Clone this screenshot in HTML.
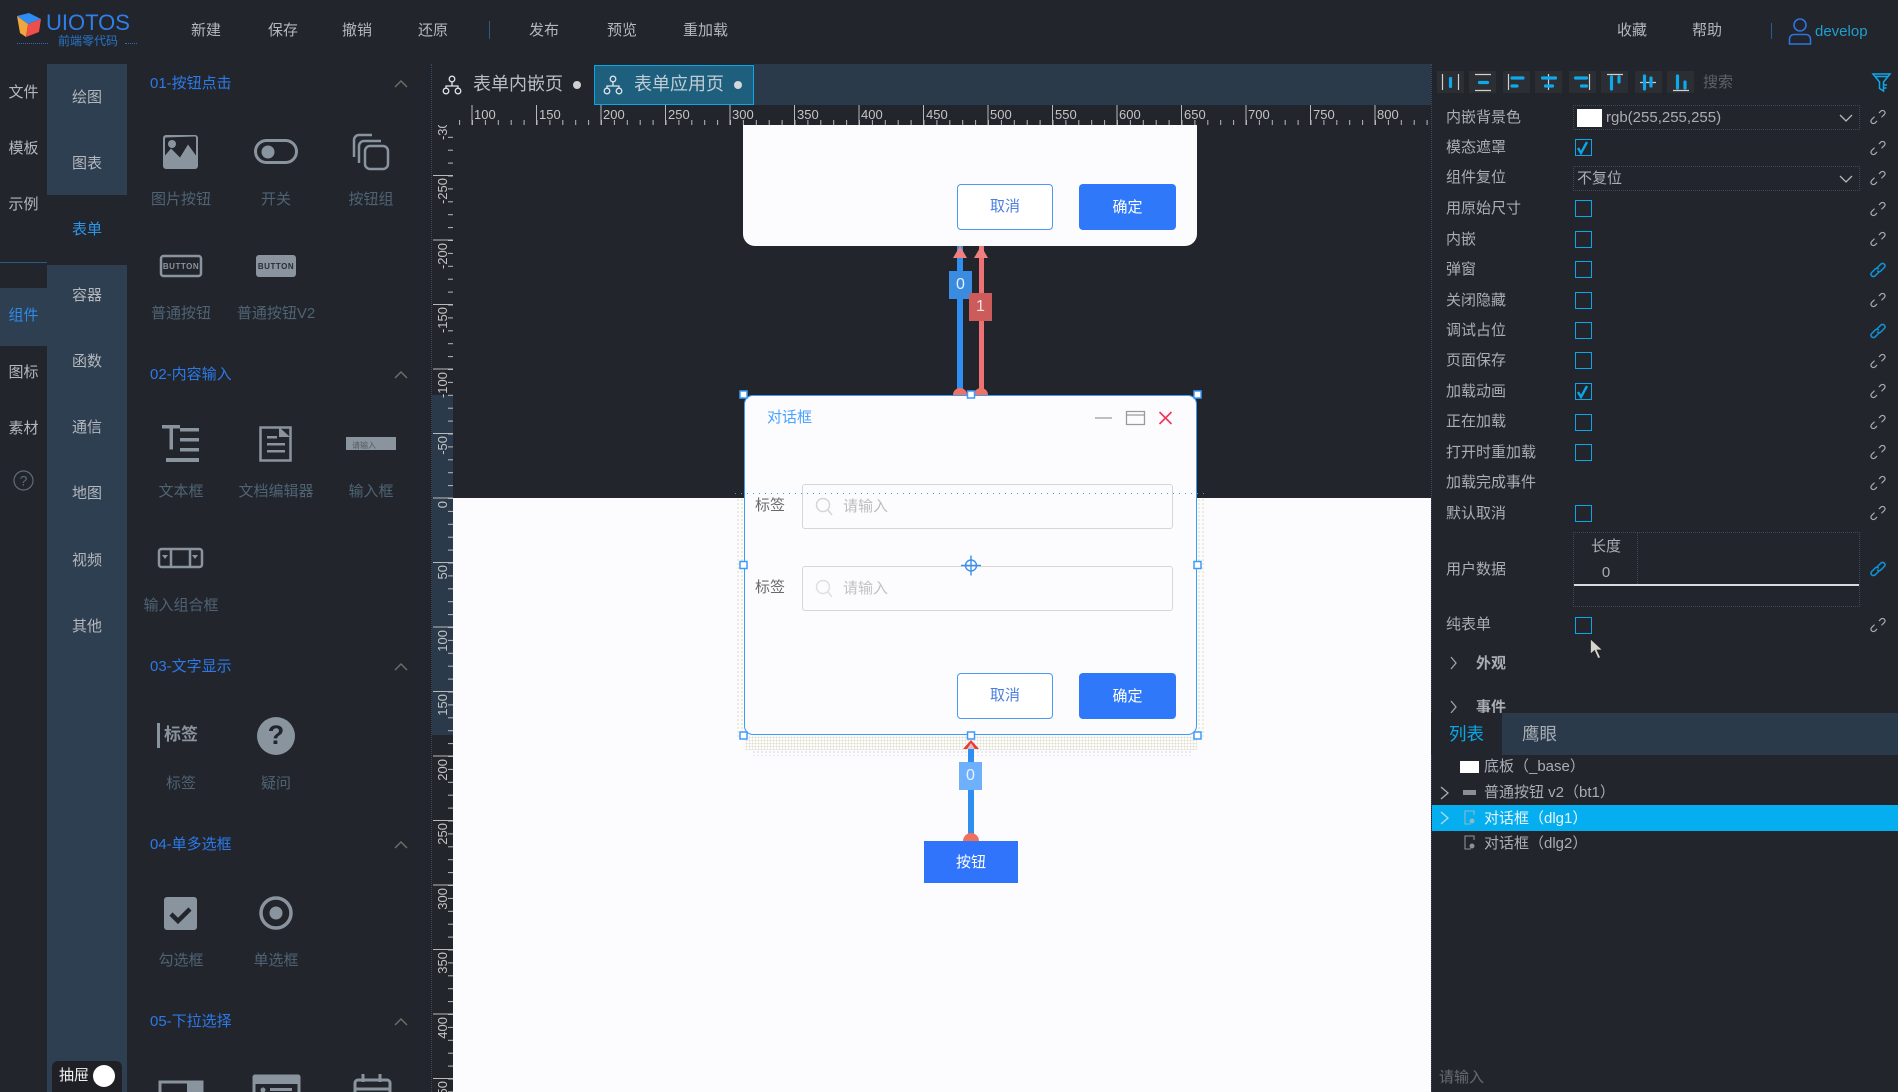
<!DOCTYPE html>
<html lang="zh"><head><meta charset="utf-8"><title>UIOTOS</title>
<style>
*{box-sizing:border-box}
html,body{margin:0;padding:0}
body{width:1898px;height:1092px;position:relative;overflow:hidden;background:#22252b;font-family:"Liberation Sans","Noto Sans CJK SC",sans-serif;font-size:15px;color:#b3b7bd}
.a{position:absolute}
.t{position:absolute;line-height:20px;height:20px;white-space:nowrap;margin-top:1px}
.c{transform:translateX(-50%)}
.m{color:#b4b8be}
.n{color:#b4b8be;text-align:center;width:47px;left:0}
.s{color:#b4b8be;text-align:center;width:80px;left:47px}
.h{color:#2c79e8;left:150px}
.l{color:#4f6375}
.r{left:1446px;color:#a9adb4}
.cb{position:absolute;left:1575px;width:17px;height:17px;border:1.5px solid #0ba6e8}
.tr{left:1484px;color:#a9adb4}
svg{position:absolute;overflow:visible}
</style></head><body>

<!-- backgrounds -->
<div class="a" style="left:47px;top:64px;width:80px;height:131px;background:#2e3f51"></div>
<div class="a" style="left:47px;top:265px;width:80px;height:827px;background:#2e3f51"></div>
<div class="a" style="left:0;top:288px;width:47px;height:58px;background:#2e3f51"></div>
<div class="a" style="left:0;top:262px;width:47px;height:1px;background:#2b5a82"></div>
<div class="a" style="left:754px;top:64px;width:677px;height:41px;background:#2a3a4b"></div>
<div class="a" style="left:594px;top:65px;width:160px;height:40px;background:#1e5f7e;border:1.5px solid #0ba6e8"></div>
<div class="a" style="left:431px;top:64px;width:0;height:1028px;border-left:1px dotted #3a4a5c"></div>
<div class="a" style="left:1431px;top:64px;width:0;height:1028px;border-left:1px dotted #3a4a5c"></div>
<div class="a" style="left:432px;top:395px;width:21px;height:340px;background:#2a3a4b"></div>

<!-- canvas -->
<div class="a" style="left:453px;top:498px;width:978px;height:594px;background:#fcfcff"></div>
<div class="a" style="left:736px;top:498px;width:8px;height:240px;background:radial-gradient(#e8e6cf .8px,transparent .9px) 0 0/4px 4px"></div>
<div class="a" style="left:1197px;top:498px;width:8px;height:240px;background:radial-gradient(#e8e6cf .8px,transparent .9px) 0 0/4px 4px"></div>
<div class="a" style="left:745px;top:736px;width:452px;height:14px;background:radial-gradient(#dfdfc8 .8px,transparent .9px) 0 0/3px 3px"></div>
<div class="a" style="left:752px;top:750px;width:440px;height:6px;background:radial-gradient(#e4e2f0 .8px,transparent .9px) 0 0/4px 4px"></div>

<!-- header -->
<svg style="left:0;top:0" width="60" height="50">
<polygon points="17,16 29,13 41,19 28,24" fill="#2e8cf5"/>
<polygon points="17,16 28,24 26,37 20,33" fill="#f0a63c"/>
<polygon points="28,24 41,19 39,32 26,37" fill="#ee4f4a"/>
</svg>
<div class="t" style="left:46px;top:12px;font-size:22px;color:#2e7fe8;line-height:20px">UIOTOS</div>
<div class="t" style="left:58px;top:30px;font-size:12px;color:#2776c9">前端零代码</div>
<div class="a" style="left:17px;top:43px;width:31px;border-top:1px dotted #2d6fb8"></div>
<div class="a" style="left:125px;top:43px;width:12px;border-top:1px dotted #2d6fb8"></div>
<div class="t m" style="left:191px;top:20px">新建</div>
<div class="t m" style="left:268px;top:20px">保存</div>
<div class="t m" style="left:342px;top:20px">撤销</div>
<div class="t m" style="left:418px;top:20px">还原</div>
<div class="a" style="left:489px;top:21px;width:1px;height:18px;background:#2c5a8c"></div>
<div class="t m" style="left:529px;top:20px">发布</div>
<div class="t m" style="left:607px;top:20px">预览</div>
<div class="t m" style="left:683px;top:20px">重加载</div>
<div class="t m" style="left:1617px;top:20px">收藏</div>
<div class="t m" style="left:1692px;top:20px">帮助</div>
<div class="a" style="left:1771px;top:23px;width:1px;height:16px;background:#2c5a8c"></div>
<svg style="left:1788px;top:18px" width="24" height="27" fill="none" stroke="#2e74e0" stroke-width="1.6"><circle cx="12" cy="7" r="6"/><path d="M1.5 26V21a4.5 4.5 0 0 1 4.5-4.5h12a4.5 4.5 0 0 1 4.5 4.5v5z"/></svg>
<div class="t" style="left:1815px;top:21px;color:#1f9fd0">develop</div>

<!-- col 1 -->
<div class="t n" style="top:82px">文件</div>
<div class="t n" style="top:138px">模板</div>
<div class="t n" style="top:194px">示例</div>
<div class="t n" style="top:305px;color:#2f8ae8">组件</div>
<div class="t n" style="top:362px">图标</div>
<div class="t n" style="top:418px">素材</div>
<svg style="left:13px;top:470px" width="22" height="22"><circle cx="10.5" cy="10.5" r="9.5" fill="none" stroke="#5f6c78" stroke-width="1.2"/><text x="10.5" y="15.5" font-size="14" text-anchor="middle" fill="#5f6c78" font-family="Liberation Sans">?</text></svg>

<!-- col 2 -->
<div class="t s" style="top:87px">绘图</div>
<div class="t s" style="top:153px">图表</div>
<div class="t s" style="top:219px;color:#2b95ea">表单</div>
<div class="t s" style="top:285px">容器</div>
<div class="t s" style="top:351px">函数</div>
<div class="t s" style="top:417px">通信</div>
<div class="t s" style="top:483px">地图</div>
<div class="t s" style="top:550px">视频</div>
<div class="t s" style="top:616px">其他</div>

<!-- panel headings -->
<div class="t h" style="top:73px">01-按钮点击</div>
<div class="t h" style="top:364px">02-内容输入</div>
<div class="t h" style="top:656px">03-文字显示</div>
<div class="t h" style="top:834px">04-单多选框</div>
<div class="t h" style="top:1011px">05-下拉选择</div>
<svg style="left:0;top:0" width="1" height="1" fill="none" stroke="#6d7268" stroke-width="1.4">
<path d="M395 87l6-6 6 6M395 378l6-6 6 6M395 670l6-6 6 6M395 848l6-6 6 6M395 1025l6-6 6 6"/>
</svg>

<!-- gallery icons -->
<svg style="left:0;top:0" width="1" height="1">
<g fill="#8a949e">
<path fill-rule="evenodd" d="M166 135h29a3 3 0 0 1 3 3v28a3 3 0 0 1-3 3h-29a3 3 0 0 1-3-3v-28a3 3 0 0 1 3-3zm0 2.500a1 1 0 0 0-1 1v17l6-7 9 9 8-13 8 11v-18a1 1 0 0 0-1-1z"/>
<circle cx="172" cy="144" r="4"/>
</g>
<rect x="255.500" y="140.500" width="41" height="22" rx="11" fill="none" stroke="#8a949e" stroke-width="3"/>
<circle cx="268" cy="152" r="6.500" fill="#8a949e"/>
<g fill="none" stroke="#8a949e" stroke-width="2.500">
<rect x="365" y="146" width="23" height="23" rx="5"/>
<path d="M359 163v-17a5 5 0 0 1 5-5h17"/>
<path d="M354 157v-17a5 5 0 0 1 5-5h13"/>
<rect x="161" y="256" width="40" height="20" rx="2.500"/>
<rect x="260.500" y="427.500" width="30" height="33"/>
<rect x="159" y="549" width="43" height="18" rx="2.500"/>
<path d="M171 549v18M190 549v18"/>
</g>
<rect x="256" y="255" width="40" height="22" rx="3" fill="#8a949e"/>
<text x="181" y="269" font-size="8" font-weight="bold" text-anchor="middle" fill="#8a949e" font-family="Liberation Sans" letter-spacing=".5">BUTTON</text>
<text x="276" y="269" font-size="8" font-weight="bold" text-anchor="middle" fill="#2a2d33" font-family="Liberation Sans" letter-spacing=".5">BUTTON</text>
<g fill="#8a949e">
<path d="M162 425h18v3.500h-7v21h-3.500v-21h-7.500z"/>
<rect x="180" y="428" width="19" height="3.500"/><rect x="180" y="438" width="19" height="3.500"/><rect x="180" y="448" width="19" height="3.500"/>
<rect x="166" y="458" width="33" height="4"/>
<path d="M279 427l11 10h-11z"/>
<rect x="267" y="436" width="10" height="2.500"/><rect x="267" y="443" width="18" height="2.500"/><rect x="267" y="450" width="18" height="2.500"/>
<rect x="346" y="437" width="50" height="13"/>
<path d="M162 555h6l-3 4zM192 555h6l-3 4z"/>
<rect x="157" y="723" width="3" height="25"/>
<circle cx="276" cy="736" r="19"/>
<rect x="164" y="897" width="33" height="33" rx="3"/>
<circle cx="276" cy="913" r="6.500"/>
</g>
<text x="352" y="448" font-size="8" fill="#555b60" font-family="Liberation Sans,Noto Sans CJK SC">请输入</text>
<text x="181" y="740" font-size="17" font-weight="bold" text-anchor="middle" fill="#8a949e" font-family="Liberation Sans,Noto Sans CJK SC">标签</text>
<text x="276" y="744" font-size="27" font-weight="bold" text-anchor="middle" fill="#22252b" font-family="Liberation Sans">?</text>
<path d="M171 914l7 7 12-12" fill="none" stroke="#22252b" stroke-width="4.500"/>
<circle cx="276" cy="913" r="15" fill="none" stroke="#8a949e" stroke-width="3.500"/>
<g fill="none" stroke="#8a949e" stroke-width="3">
<path d="M160 1094v-12h42v12"/>
<path d="M254 1094v-17a1 1 0 0 1 1-1h43a1 1 0 0 1 1 1v17"/>
<path d="M355 1094v-11a3 3 0 0 1 3-3h29a3 3 0 0 1 3 3v11M354 1089h36M363 1074v8M380 1074v8"/>
</g>
<rect x="187" y="1081" width="15" height="12" fill="#8a949e"/>
<rect x="254" y="1076" width="45" height="8" fill="#8a949e"/>
<circle cx="263" cy="1090" r="2.500" fill="#8a949e"/>
<rect x="270" y="1088" width="22" height="3" fill="#8a949e"/>
</svg>

<div class="t l c" style="left:181px;top:189px">图片按钮</div>
<div class="t l c" style="left:276px;top:189px">开关</div>
<div class="t l c" style="left:371px;top:189px">按钮组</div>
<div class="t l c" style="left:181px;top:303px">普通按钮</div>
<div class="t l c" style="left:276px;top:303px">普通按钮V2</div>
<div class="t l c" style="left:181px;top:481px">文本框</div>
<div class="t l c" style="left:276px;top:481px">文档编辑器</div>
<div class="t l c" style="left:371px;top:481px">输入框</div>
<div class="t l c" style="left:181px;top:595px">输入组合框</div>
<div class="t l c" style="left:181px;top:773px">标签</div>
<div class="t l c" style="left:276px;top:773px">疑问</div>
<div class="t l c" style="left:181px;top:950px">勾选框</div>
<div class="t l c" style="left:276px;top:950px">单选框</div>

<!-- drawer toggle -->
<div class="a" style="left:52px;top:1061px;width:70px;height:31px;border-radius:6px 6px 0 0;background:#1e2025"></div>
<div class="t" style="left:59px;top:1065px;color:#f0f0f0">抽屉</div>
<div class="a" style="left:93px;top:1065px;width:22px;height:22px;border-radius:50%;background:#fff"></div>

<!-- tabs -->
<svg style="left:0;top:0" width="1" height="1" fill="none" stroke="#dfe3e6" stroke-width="1.300">
<g><circle cx="452" cy="79" r="2.800"/><circle cx="446" cy="91" r="2.800"/><circle cx="458" cy="91" r="2.800"/><path d="M452 82v4M446 88v-2h12v2"/></g>
<g transform="translate(161,0)"><circle cx="452" cy="79" r="2.800"/><circle cx="446" cy="91" r="2.800"/><circle cx="458" cy="91" r="2.800"/><path d="M452 82v4M446 88v-2h12v2"/></g>
</svg>
<div class="t" style="left:473px;top:73px;font-size:18px;color:#b9bdc3">表单内嵌页</div>
<div class="a" style="left:573px;top:81px;width:8px;height:8px;border-radius:50%;background:#cfcfcf"></div>
<div class="t" style="left:634px;top:73px;font-size:18px;color:#c0ccd4">表单应用页</div>
<div class="a" style="left:734px;top:81px;width:8px;height:8px;border-radius:50%;background:#d4d8da"></div>

<!-- rulers -->
<svg style="left:0;top:0" width="1898" height="1092">
<defs>
<pattern id="hp" patternUnits="userSpaceOnUse" width="12.900" height="5" x="472" y="120"><rect width="1" height="5" fill="#b9b9b9"/></pattern>
<pattern id="vp" patternUnits="userSpaceOnUse" width="5" height="12.900" x="448" y="498"><rect width="5" height="1" fill="#b9b9b9"/></pattern>
<clipPath id="hc"><rect x="453" y="105" width="978" height="20"/></clipPath>
<clipPath id="vc"><rect x="432" y="125" width="21" height="967"/></clipPath>
</defs>
<rect x="453" y="120" width="978" height="5" fill="url(#hp)"/>
<rect x="448" y="125" width="5" height="967" fill="url(#vp)"/>
<path d="M472 105v20M536.500 105v20M601 105v20M665.500 105v20M730 105v20M794.500 105v20M859 105v20M923.500 105v20M988 105v20M1052.500 105v20M1117 105v20M1181.500 105v20M1246 105v20M1310.500 105v20M1375 105v20" stroke="#b9b9b9" stroke-width="1" fill="none"/>
<path d="M433 175.500h20M433 240h20M433 304.500h20M433 369h20M433 433.500h20M433 498h20M433 562.500h20M433 627h20M433 691.500h20M433 756h20M433 820.500h20M433 885h20M433 949.500h20M433 1014h20M433 1078.500h20" stroke="#b9b9b9" stroke-width="1" fill="none"/>
<g font-size="13" fill="#c4c4c4" font-family="Liberation Sans" clip-path="url(#hc)">
<text x="474" y="119">100</text><text x="539" y="119">150</text><text x="603" y="119">200</text><text x="668" y="119">250</text><text x="732" y="119">300</text><text x="797" y="119">350</text><text x="861" y="119">400</text><text x="926" y="119">450</text><text x="990" y="119">500</text><text x="1055" y="119">550</text><text x="1119" y="119">600</text><text x="1184" y="119">650</text><text x="1248" y="119">700</text><text x="1313" y="119">750</text><text x="1377" y="119">800</text>
</g>
<g font-size="13" fill="#c4c4c4" font-family="Liberation Sans" text-anchor="end" clip-path="url(#vc)">
<text transform="translate(447,114) rotate(-90)">-300</text>
<text transform="translate(447,178) rotate(-90)">-250</text>
<text transform="translate(447,243) rotate(-90)">-200</text>
<text transform="translate(447,307) rotate(-90)">-150</text>
<text transform="translate(447,372) rotate(-90)">-100</text>
<text transform="translate(447,436) rotate(-90)">-50</text>
<text transform="translate(447,501) rotate(-90)">0</text>
<text transform="translate(447,565) rotate(-90)">50</text>
<text transform="translate(447,630) rotate(-90)">100</text>
<text transform="translate(447,694) rotate(-90)">150</text>
<text transform="translate(447,759) rotate(-90)">200</text>
<text transform="translate(447,823) rotate(-90)">250</text>
<text transform="translate(447,888) rotate(-90)">300</text>
<text transform="translate(447,952) rotate(-90)">350</text>
<text transform="translate(447,1017) rotate(-90)">400</text>
<text transform="translate(447,1081) rotate(-90)">450</text>
</g>
</svg>

<!-- top dialog -->
<div class="a" style="left:743px;top:125px;width:454px;height:121px;background:#fcfcff;border-radius:0 0 12px 12px"></div>
<div class="a" style="left:957px;top:184px;width:96px;height:46px;border:1.5px solid #4b97f5;border-radius:4px;background:#fff;color:#4b7fe0;text-align:center;line-height:44px">取消</div>
<div class="a" style="left:1079px;top:184px;width:97px;height:46px;background:#2f78fa;border-radius:4px;color:#fff;text-align:center;line-height:47px">确定</div>

<!-- connectors top -->
<div class="a" style="left:957px;top:246px;width:6px;height:150px;background:#2e8ff0"></div>
<div class="a" style="left:979px;top:246px;width:5px;height:150px;background:#ee7272"></div>
<svg style="left:0;top:0" width="1" height="1">
<polygon points="960,246 953,258 967,258" fill="#f08080"/>
<polygon points="981,246 974,258 988,258" fill="#f08080"/>
<path d="M953 395a7 7 0 0 1 14 0zM974 395a7 7 0 0 1 14 0z" fill="#ee7266"/>
</svg>
<div class="a" style="left:949px;top:271px;width:23px;height:28px;background:#3a8ce0;color:#e8f0fa;text-align:center;line-height:27px;font-size:16px">0</div>
<div class="a" style="left:969px;top:293px;width:23px;height:28px;background:#cc5b5b;color:#f5e3e3;text-align:center;line-height:27px;font-size:16px">1</div>

<!-- selected dialog -->
<div class="a" style="left:744px;top:395px;width:453px;height:340px;background:#fcfcff;border:1.5px solid #3d9bf8;border-radius:9px"></div>
<div class="t" style="left:767px;top:407px;color:#4ba3ff">对话框</div>
<svg style="left:0;top:0" width="1" height="1" fill="none">
<path d="M1095 418h17" stroke="#9a9a9a" stroke-width="1.200"/>
<path d="M1126.500 411.500h18v13h-18zM1126.500 415h18" stroke="#9a9a9a" stroke-width="1.300"/>
<path d="M1159.500 412l12 12M1171.500 412l-12 12" stroke="#f5335a" stroke-width="1.600"/>
<circle cx="823" cy="505" r="6.500" stroke="#d5d5d5" stroke-width="1.500"/><path d="M828 510l4 5" stroke="#d5d5d5" stroke-width="1.500"/>
<circle cx="823" cy="587" r="6.500" stroke="#dfdfdf" stroke-width="1.500"/><path d="M828 592l4 5" stroke="#dfdfdf" stroke-width="1.500"/>
</svg>
<div class="t" style="left:755px;top:495px;color:#6a6a6a">标签</div>
<div class="t" style="left:755px;top:577px;color:#6a6a6a">标签</div>
<div class="a" style="left:802px;top:484px;width:371px;height:45px;border:1px solid #d6d6d2;border-radius:3px"></div>
<div class="a" style="left:802px;top:566px;width:371px;height:45px;border:1px solid #d6d6d2;border-radius:3px"></div>
<div class="t" style="left:843px;top:496px;color:#bdbdbd">请输入</div>
<div class="t" style="left:843px;top:578px;color:#c2c2c2">请输入</div>
<div class="a" style="left:957px;top:673px;width:96px;height:46px;border:1.5px solid #4b97f5;border-radius:4px;background:#fff;color:#4b7fe0;text-align:center;line-height:44px">取消</div>
<div class="a" style="left:1079px;top:673px;width:97px;height:46px;background:#2f78fa;border-radius:4px;color:#fff;text-align:center;line-height:47px">确定</div>
<div class="a" style="left:735px;top:493px;width:472px;height:1px;background:repeating-linear-gradient(90deg,#3d9bf8 0 1px,transparent 1px 6px)"></div>

<!-- crosshair -->
<svg style="left:0;top:0" width="1" height="1" fill="none" stroke="#3d8ff0" stroke-width="1.400">
<circle cx="971" cy="565.500" r="5.500"/><path d="M961 565.500h20M971 555.500v20"/>
</svg>

<!-- handles -->
<svg style="left:0;top:0" width="1" height="1" fill="#fff" stroke="#3d9bf8" stroke-width="1.500">
<rect x="740" y="391" width="7" height="7"/><rect x="967.500" y="391" width="7" height="7"/><rect x="1194" y="391" width="7" height="7"/>
<rect x="740" y="561.500" width="7" height="7"/><rect x="1194" y="561.500" width="7" height="7"/>
<rect x="740" y="732" width="7" height="7"/><rect x="967.500" y="732" width="7" height="7"/><rect x="1194" y="732" width="7" height="7"/>
</svg>

<!-- bottom connector -->
<div class="a" style="left:968px;top:748px;width:6px;height:88px;background:#2e8ff0"></div>
<svg style="left:0;top:0" width="1" height="1">
<polygon points="971,740 963,749 979,749" fill="#f03535"/>
<polygon points="971,743 967,749 975,749" fill="#d8c0c0"/>
<path d="M963 841a8 8 0 0 1 16 0z" fill="#f0705e"/>
</svg>
<div class="a" style="left:959px;top:762px;width:23px;height:28px;background:#6eb0fc;color:#e8f2ff;text-align:center;line-height:27px;font-size:16px">0</div>
<div class="a" style="left:924px;top:841px;width:94px;height:42px;background:#2f74fa;color:#fff;text-align:center;line-height:43px;font-size:15px">按钮</div>

<!-- right panel toolbar -->
<svg style="left:0;top:0" width="1" height="1">
<g fill="#2b2e33"><rect x="1437" y="71" width="27" height="22"/><rect x="1469" y="71" width="27" height="22"/><rect x="1503" y="71" width="27" height="22"/><rect x="1535" y="71" width="27" height="22"/><rect x="1569" y="71" width="27" height="22"/><rect x="1601" y="71" width="27" height="22"/><rect x="1635" y="71" width="27" height="22"/><rect x="1667" y="71" width="27" height="22"/></g>
<g stroke="#d0d0d0" stroke-width="1.200" fill="none">
<path d="M1442.500 74v16M1458.500 74v16M1475 74.500h16M1475 90.500h16M1508.500 74v16M1548.500 74v16M1589.500 74v16M1607 74.500h16M1640 82.500h16M1673 90.500h16"/>
</g>
<g stroke="#0fa8ea" stroke-width="3.200" stroke-linecap="round" fill="none">
<path d="M1450.500 78.500v8M1479.500 82.500h8M1512 78h11M1512 86h5M1542.500 78h13M1545.500 86h7M1575.500 78h11M1581.500 86h5M1611.500 77v12M1619 77v5M1644.500 76v13M1651 78v8M1677.500 76v12M1685 82v6"/>
</g>
<path d="M1873 74h17l-6.500 8v9l-4-2.500v-6.500zM1875.500 76.500h12M1884 85h3M1884 88h2.500" fill="none" stroke="#0fa8ea" stroke-width="1.500"/>
</svg>
<div class="t" style="left:1703px;top:72px;color:#5f6266">搜索</div>

<!-- property rows -->
<div class="t r" style="top:107px">内嵌背景色</div>
<div class="t r" style="top:137px">模态遮罩</div>
<div class="t r" style="top:167px">组件复位</div>
<div class="t r" style="top:198px">用原始尺寸</div>
<div class="t r" style="top:229px">内嵌</div>
<div class="t r" style="top:259px">弹窗</div>
<div class="t r" style="top:290px">关闭隐藏</div>
<div class="t r" style="top:320px">调试占位</div>
<div class="t r" style="top:350px">页面保存</div>
<div class="t r" style="top:381px">加载动画</div>
<div class="t r" style="top:411px">正在加载</div>
<div class="t r" style="top:442px">打开时重加载</div>
<div class="t r" style="top:472px">加载完成事件</div>
<div class="t r" style="top:503px">默认取消</div>
<div class="t r" style="top:559px">用户数据</div>
<div class="t r" style="top:614px">纯表单</div>
<div class="t" style="left:1476px;top:653px;font-weight:bold;color:#a9adb4">外观</div>
<div class="t" style="left:1476px;top:697px;font-weight:bold;color:#a9adb4">事件</div>

<div class="a" style="left:1573px;top:105px;width:287px;height:25px;border:1px dotted #3b4a58"></div>
<div class="a" style="left:1577px;top:109px;width:25px;height:18px;background:#fff"></div>
<div class="t" style="left:1606px;top:107px;color:#a9adb4">rgb(255,255,255)</div>
<div class="a" style="left:1573px;top:166px;width:287px;height:25px;border:1px dotted #3b4a58"></div>
<div class="t" style="left:1577px;top:168px;color:#a9adb4">不复位</div>

<div class="cb" style="top:139px"></div>
<div class="cb" style="top:200px"></div>
<div class="cb" style="top:231px"></div>
<div class="cb" style="top:261px"></div>
<div class="cb" style="top:292px"></div>
<div class="cb" style="top:322px"></div>
<div class="cb" style="top:352px"></div>
<div class="cb" style="top:383px"></div>
<div class="cb" style="top:414px"></div>
<div class="cb" style="top:444px"></div>
<div class="cb" style="top:505px"></div>
<div class="cb" style="top:617px"></div>

<svg style="left:0;top:0" width="1" height="1" fill="none">
<defs>
<g id="lk" stroke-width="1.200" stroke-linecap="round" fill="none"><path d="M9.300 3.700L11 2Q12.500 .9 14.200 2Q15.800 3.600 14.500 5.300L11.800 8"/><path d="M6.700 12.300L5 14Q3.500 15.100 1.800 14Q.2 12.400 1.500 10.700L4.200 8"/></g>
<g id="lb" stroke-width="1.500" stroke-linecap="round" fill="none"><path d="M6.500 6.500L11 2Q12.500 .9 14.200 2Q15.800 3.600 14.500 5.300L10.500 9.300Q9 10.400 7.500 9"/><path d="M9.500 9.500L5 14Q3.500 15.100 1.800 14Q.2 12.400 1.500 10.700L5.500 6.700Q7 5.600 8.500 7"/></g>
</defs>
<g stroke="#a8abaf">
<use href="#lk" x="1870" y="109"/><use href="#lk" x="1870" y="140"/><use href="#lk" x="1870" y="170"/><use href="#lk" x="1870" y="201"/><use href="#lk" x="1870" y="231"/><use href="#lk" x="1870" y="292"/><use href="#lk" x="1870" y="353"/><use href="#lk" x="1870" y="383"/><use href="#lk" x="1870" y="414"/><use href="#lk" x="1870" y="444"/><use href="#lk" x="1870" y="475"/><use href="#lk" x="1870" y="505"/><use href="#lk" x="1870" y="617"/>
</g>
<g stroke="#0f93d8"><use href="#lb" x="1870" y="262"/><use href="#lb" x="1870" y="323"/><use href="#lb" x="1870" y="561"/></g>
<path d="M1840 115l6 6 6-6M1840 176l6 6 6-6" stroke="#b4b8bc" stroke-width="1.300"/>
<path d="M1578 148l3 5 6-11" stroke="#0ba6e8" stroke-width="2.400"/>
<path d="M1578 392l3 5 6-11" stroke="#0ba6e8" stroke-width="2.400"/>
<path d="M1451 657l5 6-5 6M1451 701l5 6-5 6" stroke="#9fa3a8" stroke-width="1.300"/>
</svg>

<!-- user data table -->
<div class="a" style="left:1573px;top:532px;width:287px;height:75px;border:1px dotted #3b4a58"></div>
<div class="a" style="left:1637px;top:532px;height:52px;border-left:1px dotted #3b4a58"></div>
<div class="a" style="left:1574px;top:584px;width:285px;height:2px;background:#d8dadc"></div>
<div class="t c" style="left:1606px;top:536px;color:#a9adb4">长度</div>
<div class="t c" style="left:1606px;top:562px;color:#a9adb4">0</div>

<!-- cursor -->
<svg style="left:1590px;top:639px" width="16" height="22"><path d="M.5 0v15l4-3.500 3.500 8 2.500-1-3.500-7.500h5.500z" fill="#d6d6cf" stroke="#222" stroke-width=".7"/></svg>

<!-- tree -->
<div class="a" style="left:1431px;top:713px;width:467px;height:1px;border-top:1px dotted #3b4a58"></div>
<div class="a" style="left:1502px;top:713px;width:396px;height:42px;background:#2a3a4b"></div>
<div class="a" style="left:1431px;top:713px;width:71px;height:42px;background:#22252b"></div>
<div class="t" style="left:1449px;top:723px;font-size:17.500px;color:#0ba6e8">列表</div>
<div class="t" style="left:1522px;top:723px;font-size:17.500px;color:#a9adb4">鹰眼</div>
<div class="a" style="left:1432px;top:805px;width:466px;height:26px;background:#05aeef"></div>
<div class="a" style="left:1460px;top:761px;width:19px;height:12px;background:#fff"></div>
<svg style="left:0;top:0" width="1" height="1" fill="none">
<path d="M1441 787l7 6-7 6" stroke="#a9adb4" stroke-width="1.300"/>
<path d="M1441 812l7 6-7 6" stroke="#b8dbe8" stroke-width="1.300"/>
<rect x="1463" y="790" width="13" height="5" fill="#8a8f94"/>
<path d="M1474 815v-4h-9v13h6" stroke="#8cb8cc" stroke-width="1.100"/><circle cx="1472" cy="821" r="2.500" fill="#8cb8cc"/>
<path d="M1474 840v-4h-9v13h6" stroke="#8d9196" stroke-width="1.100"/><circle cx="1472" cy="846" r="2.500" fill="#8d9196"/>
</svg>
<div class="t tr" style="top:756px">底板（_base）</div>
<div class="t tr" style="top:782px">普通按钮 v2（bt1）</div>
<div class="t tr" style="top:808px;color:#e6f5fc">对话框（dlg1）</div>
<div class="t tr" style="top:833px">对话框（dlg2）</div>
<div class="t" style="left:1439px;top:1067px;color:#686b6f">请输入</div>

</body></html>
